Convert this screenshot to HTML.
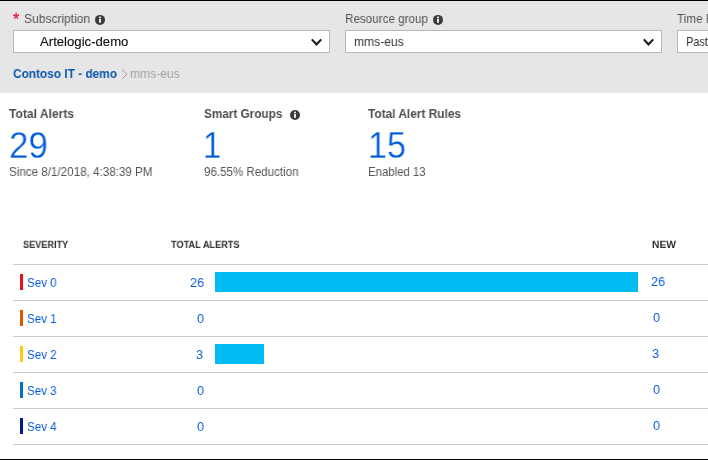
<!DOCTYPE html>
<html><head><meta charset="utf-8">
<style>
html,body{margin:0;padding:0;}
body{width:708px;height:460px;overflow:hidden;background:#fff;position:relative;font-family:"Liberation Sans",sans-serif;}
.t{position:absolute;white-space:nowrap;line-height:1;transform-origin:0 0;will-change:transform;}
.top{position:absolute;left:0;top:0;width:708px;height:1px;background:#000;}
.bot{position:absolute;left:0;top:459px;width:708px;height:1px;background:#000;}
.hdr{position:absolute;left:0;top:1px;width:708px;height:92px;background:#e6e6e6;}
.sel{position:absolute;top:30px;height:21px;background:#fff;border:1px solid #b8b8b8;}
.line{position:absolute;left:13px;width:695px;height:1px;background:#ccc;}
.cbar{position:absolute;left:20px;width:3px;height:16px;}
.bar{position:absolute;left:215px;height:20px;background:#00bcf2;}
svg{position:absolute;overflow:visible;}
</style></head><body>
<div class="hdr"></div>
<div class="top"></div>
<div class="sel" style="left:13px;width:315px;"></div>
<div class="sel" style="left:345px;width:315px;"></div>
<div class="sel" style="left:677px;width:315px;"></div>
<svg style="left:0;top:0" width="708" height="460" viewBox="0 0 708 460">
 <g id="info1" transform="translate(100,19.9)"><circle r="5" fill="#3b3b3b"/><rect x="-0.9" y="-1.1" width="1.8" height="3.9" fill="#fff"/><rect x="-0.9" y="-3.3" width="1.8" height="1.5" fill="#fff"/></g>
 <g id="info2" transform="translate(438,19.9)"><circle r="5" fill="#3b3b3b"/><rect x="-0.9" y="-1.1" width="1.8" height="3.9" fill="#fff"/><rect x="-0.9" y="-3.3" width="1.8" height="1.5" fill="#fff"/></g>
 <g id="info3" transform="translate(295,115)"><circle r="5" fill="#3b3b3b"/><rect x="-0.9" y="-1.1" width="1.8" height="3.9" fill="#fff"/><rect x="-0.9" y="-3.3" width="1.8" height="1.5" fill="#fff"/></g>
 <polygon points="311.0,40.1 312.5,38.7 316.5,42.8 320.5,38.7 322.0,40.1 316.5,46.1" fill="#1c1c1c"/>
 <polygon transform="translate(332,0)" points="311.0,40.1 312.5,38.7 316.5,42.8 320.5,38.7 322.0,40.1 316.5,46.1" fill="#1c1c1c"/>
 <path d="M122,69.5 L127,74.2 L122,79" fill="none" stroke="#9c9c9c" stroke-width="1"/>
</svg>
<div class="t" style="left:13.1px;top:11.9px;font-size:16px;color:#e8112d;-webkit-text-stroke:0.3px #e8112d;">*</div>

<div class="line" style="top:264px"></div>
<div class="line" style="top:300px"></div>
<div class="line" style="top:336px"></div>
<div class="line" style="top:372px"></div>
<div class="line" style="top:408px"></div>
<div class="line" style="top:444px"></div>

<div class="cbar" style="top:274px;background:#e81123"></div>
<div class="cbar" style="top:310px;background:#dd5900"></div>
<div class="cbar" style="top:346px;background:#fdcd0f"></div>
<div class="cbar" style="top:382px;background:#0072c6"></div>
<div class="cbar" style="top:418px;background:#00188f"></div>
<div class="bar" style="top:272px;width:423px"></div>
<div class="bar" style="top:344px;width:49px"></div>
<div class="t" style="left:23.58px;top:12.00px;font-size:13px;font-weight:normal;color:#555;transform:scale(0.9243,1);transform-origin:0 11px;">Subscription</div>
<div class="t" style="left:345.30px;top:12.00px;font-size:13px;font-weight:normal;color:#555;transform:scale(0.8967,1);transform-origin:0 11px;">Resource group</div>
<div class="t" style="left:677.20px;top:12.00px;font-size:13px;font-weight:normal;color:#555;transform:scale(0.9000,1);transform-origin:0 11px;">Time Range</div>
<div class="t" style="left:40.30px;top:35.00px;font-size:13px;font-weight:normal;color:#0a0a0a;transform:scale(1.0115,1);transform-origin:0 11px;-webkit-text-stroke:0.1px #0a0a0a;">Artelogic-demo</div>
<div class="t" style="left:353.77px;top:35.00px;font-size:13px;font-weight:normal;color:#333;transform:scale(0.9288,1);transform-origin:0 11px;">mms-eus</div>
<div class="t" style="left:685.96px;top:35.00px;font-size:13px;font-weight:normal;color:#333;transform:scale(0.8360,1);transform-origin:0 11px;">Past hour</div>
<div class="t" style="left:13.40px;top:67.30px;font-size:13px;font-weight:bold;color:#0b57ad;transform:scale(0.9114,1);transform-origin:0 11px;">Contoso IT - demo</div>
<div class="t" style="left:130.07px;top:67.30px;font-size:13px;font-weight:normal;color:#a3a3a3;transform:scale(0.9288,1);transform-origin:0 11px;">mms-eus</div>
<div class="t" style="left:8.60px;top:107.00px;font-size:13px;font-weight:bold;color:#4d4d4d;transform:scale(0.9290,1);transform-origin:0 11px;">Total Alerts</div>
<div class="t" style="left:203.80px;top:107.00px;font-size:13px;font-weight:bold;color:#4d4d4d;transform:scale(0.9035,1);transform-origin:0 11px;">Smart Groups</div>
<div class="t" style="left:368.25px;top:107.00px;font-size:13px;font-weight:bold;color:#4d4d4d;transform:scale(0.9134,1);transform-origin:0 11px;">Total Alert Rules</div>
<div class="t" style="left:8.98px;top:128.00px;font-size:36.5px;font-weight:normal;color:#015cda;transform:scale(0.9595,1);transform-origin:0 30px;-webkit-text-stroke:0.3px #fff;">29</div>
<div class="t" style="left:202.80px;top:128.00px;font-size:36.5px;font-weight:normal;color:#015cda;transform:scale(0.9000,1);transform-origin:0 30px;-webkit-text-stroke:0.3px #fff;">1</div>
<div class="t" style="left:368.44px;top:128.00px;font-size:36.5px;font-weight:normal;color:#015cda;transform:scale(0.9375,1);transform-origin:0 30px;-webkit-text-stroke:0.3px #fff;">15</div>
<div class="t" style="left:8.53px;top:165.50px;font-size:12px;font-weight:normal;color:#555;transform:scale(0.9692,1);transform-origin:0 10px;">Since 8/1/2018, 4:38:39 PM</div>
<div class="t" style="left:203.54px;top:165.50px;font-size:12px;font-weight:normal;color:#555;transform:scale(0.9635,1);transform-origin:0 10px;">96.55% Reduction</div>
<div class="t" style="left:367.80px;top:165.50px;font-size:12px;font-weight:normal;color:#555;transform:scale(0.9500,1);transform-origin:0 10px;">Enabled 13</div>
<div class="t" style="left:23.00px;top:240.00px;font-size:10px;font-weight:bold;color:#303030;transform:scale(0.9143,0.91);transform-origin:0 8px;">SEVERITY</div>
<div class="t" style="left:171.00px;top:240.00px;font-size:10px;font-weight:bold;color:#303030;transform:scale(0.9176,0.91);transform-origin:0 8px;">TOTAL ALERTS</div>
<div class="t" style="left:652.17px;top:240.00px;font-size:10px;font-weight:bold;color:#303030;transform:scale(1.0273,0.91);transform-origin:0 8px;">NEW</div>
<div class="t" style="left:26.81px;top:276.00px;font-size:13px;font-weight:normal;color:#0d5cda;transform:scale(0.8900,1);transform-origin:0 11px;">Sev 0</div>
<div class="t" style="left:190.23px;top:276.00px;font-size:13px;font-weight:normal;color:#0d5cda;transform:scale(0.9700,1);transform-origin:0 11px;">26</div>
<div class="t" style="left:651.43px;top:275.00px;font-size:13px;font-weight:normal;color:#0d5cda;transform:scale(0.9700,1);transform-origin:0 11px;">26</div>
<div class="t" style="left:26.81px;top:312.00px;font-size:13px;font-weight:normal;color:#0d5cda;transform:scale(0.8900,1);transform-origin:0 11px;">Sev 1</div>
<div class="t" style="left:197.30px;top:312.00px;font-size:13px;font-weight:normal;color:#0d5cda;transform:scale(0.9700,1);transform-origin:0 11px;">0</div>
<div class="t" style="left:652.60px;top:311.00px;font-size:13px;font-weight:normal;color:#0d5cda;transform:scale(0.9700,1);transform-origin:0 11px;">0</div>
<div class="t" style="left:26.81px;top:348.00px;font-size:13px;font-weight:normal;color:#0d5cda;transform:scale(0.8900,1);transform-origin:0 11px;">Sev 2</div>
<div class="t" style="left:196.43px;top:348.00px;font-size:13px;font-weight:normal;color:#0d5cda;transform:scale(0.9700,1);transform-origin:0 11px;">3</div>
<div class="t" style="left:651.63px;top:347.00px;font-size:13px;font-weight:normal;color:#0d5cda;transform:scale(0.9700,1);transform-origin:0 11px;">3</div>
<div class="t" style="left:26.81px;top:384.00px;font-size:13px;font-weight:normal;color:#0d5cda;transform:scale(0.8900,1);transform-origin:0 11px;">Sev 3</div>
<div class="t" style="left:197.30px;top:384.00px;font-size:13px;font-weight:normal;color:#0d5cda;transform:scale(0.9700,1);transform-origin:0 11px;">0</div>
<div class="t" style="left:652.60px;top:383.00px;font-size:13px;font-weight:normal;color:#0d5cda;transform:scale(0.9700,1);transform-origin:0 11px;">0</div>
<div class="t" style="left:26.81px;top:420.00px;font-size:13px;font-weight:normal;color:#0d5cda;transform:scale(0.8900,1);transform-origin:0 11px;">Sev 4</div>
<div class="t" style="left:197.30px;top:420.00px;font-size:13px;font-weight:normal;color:#0d5cda;transform:scale(0.9700,1);transform-origin:0 11px;">0</div>
<div class="t" style="left:652.60px;top:419.00px;font-size:13px;font-weight:normal;color:#0d5cda;transform:scale(0.9700,1);transform-origin:0 11px;">0</div>
<div class="bot"></div>
</body></html>
